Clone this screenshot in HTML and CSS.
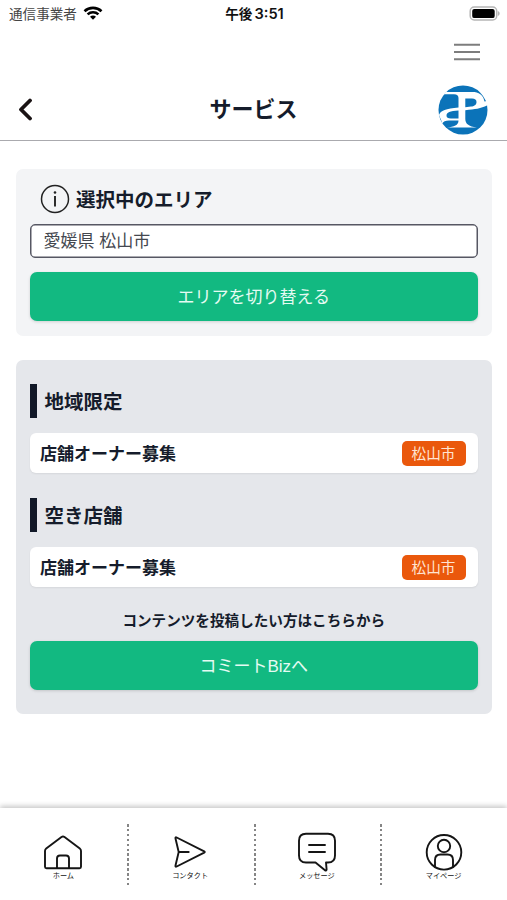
FILE: index.html
```html
<!DOCTYPE html>
<html lang="ja">
<head>
<meta charset="utf-8">
<title>サービス</title>
<link rel="stylesheet" href="styles.css">
</head>
<body>
<div class="app">
  <div class="status">
    <div class="carrier"><span>通信事業者</span>
      <svg width="20" height="14" viewBox="0 0 20 14" fill="none" stroke="#000" stroke-width="2.6"><path d="M1.5 5.2C6.2.7 13.8.7 18.5 5.2M4.6 8.4c3-2.8 7.8-2.8 10.8 0"/><path d="M7 10.7c1.700-1.500 4.300-1.500 6 0l-3 3z" fill="#000" stroke="none"/></svg>
    </div>
    <div class="clock">午後<span>3:51</span></div>
    <svg class="battery" width="31" height="15" viewBox="0 0 31 15"><rect x="1.200" y="1" width="26.500" height="13" rx="4" fill="#fff" stroke="#b5b5b5" stroke-width="1.500"/><rect x="3.200" y="2.900" width="22.500" height="9.200" rx="2.200" fill="#000"/><path d="M28.800 5c2.500.7 2.500 4.300 0 5z" fill="#b5b5b5"/></svg>
  </div>
  <div class="menu">
    <svg width="28" height="18" viewBox="0 0 28 18" stroke="#7d7d7d" stroke-width="2"><path d="M1 1.700h26M1 9h26M1 16.200h26"/></svg>
  </div>
  <header class="header">
    <svg class="back" width="14" height="24" viewBox="0 0 14 24" fill="none" stroke="#1a1314" stroke-width="3.800" stroke-linecap="round" stroke-linejoin="round"><path d="M12 3.500 3 12.500l9 9"/></svg>
    <h1 class="title">サービス</h1>
    <svg class="logo" width="50" height="50" viewBox="0 0 50 50">
      <circle cx="25" cy="25" r="24.500" fill="#0b73b9"/>
      <path fill="#fff" d="M8 7H34c7 0 11 2.500 12.500 9.500l2.500-.5v4.500C43 23.500 37 24.300 27.300 25.200V34c0 4.500 3 7.500 11.700 8.500H9c7-.7 11.500-2 11.500-7H11c-3.500 0-6 1-6.500 3L1 30c1.500-4.500 7-6.500 19.500-7.500V13c0-2.500-1.500-3.800-4.500-3.800H6z"/>
      <path fill="#0b73b9" d="M27.300 13.500H34c3 0 4.500 1.200 4.500 3.500 0 3-2.500 4.200-5.500 4.600l-5.700.7zM20.500 25.500v8h-7.700c-2.800 0-4.300-.8-4.300-3 0-3.200 3.500-4.400 12-5z"/>
    </svg>
  </header>
  <main class="main">
    <section class="card area">
      <h2 class="area-title">
        <svg width="30" height="30" viewBox="0 0 30 30" fill="none" stroke="#222"><circle cx="15" cy="15" r="13.500" stroke-width="1.500"/><path d="M15 12V22.500" stroke-width="1.900"/><circle cx="15" cy="8.500" r="1.300" fill="#222" stroke="none"/></svg>
        <span>選択中のエリア</span>
      </h2>
      <div class="field"><span>愛媛県 松山市</span></div>
      <a class="button"><span>エリアを切り替える</span></a>
    </section>
    <section class="card services">
      <h3 class="group">地域限定</h3>
      <div class="row"><span>店舗オーナー募集</span><span class="badge">松山市</span></div>
      <h3 class="group">空き店舗</h3>
      <div class="row"><span>店舗オーナー募集</span><span class="badge">松山市</span></div>
      <p class="caption">コンテンツを投稿したい方はこちらから</p>
      <a class="button"><span>コミートBizへ</span></a>
    </section>
  </main>
  <nav class="tabs">
    <a class="tab">
      <svg width="40" height="40" viewBox="0 0 40 40"><path d="M3.500 36.200h33q1.500 0 1.500-1.500V19q0-1.500-1.200-2.400L21.500 5q-1.500-1-3 0L3.200 16.600Q2 17.500 2 19v15.700q0 1.500 1.500 1.500zM14 36V26.500q0-3 3-3h6q3 0 3 3V36"/></svg>
      <span>ホーム</span>
    </a>
    <a class="tab">
      <svg width="40" height="40" viewBox="0 0 40 40"><path d="M5.500 6.500q-.4-1.700 1.200-1l27.500 13.800q1.200.7 0 1.400L6.700 34.500q-1.600.7-1.200-1L8.700 20zM8.700 20h10"/></svg>
      <span>コンタクト</span>
    </a>
    <a class="tab">
      <svg width="40" height="40" viewBox="0 0 40 40"><path d="M9 1.800h22q7 0 7 7v14.700q0 7-7 7h-2l.6 7q0 1.500-1.600.8L18.500 30.500H9q-7 0-7-7V8.800q0-7 7-7zM12 13h16M12 20h16"/></svg>
      <span>メッセージ</span>
    </a>
    <a class="tab">
      <svg width="40" height="40" viewBox="0 0 40 40"><circle cx="20" cy="20.300" r="17.300"/><circle cx="20" cy="14" r="6.200"/><path d="M11 34.800V28q0-5.500 5.500-5.500h7q5.500 0 5.500 5.500v6.800"/></svg>
      <span>マイページ</span>
    </a>
  </nav>
</div>
</body>
</html>
```

FILE: styles.css
```css
* { box-sizing: border-box; }
body {
  margin: 0;
  background: #fff;
  color: #151c2b;
  font-family: "Liberation Sans", "Noto Sans CJK JP", sans-serif;
}
h1, h2, h3, p { margin: 0; }
svg { display: block; flex: none; }
.app { height: 900px; display: flex; flex-direction: column; overflow: hidden; }

.status {
  height: 28px;
  padding: 0 7px 0 9px;
  display: grid;
  grid-template-columns: 1fr auto 1fr;
  align-items: center;
  font-size: 13.6px;
  line-height: 20px;
}
.carrier { display: flex; align-items: center; gap: 6px; color: #444; }
.carrier span { padding-top: 1px; }
.carrier svg { margin-top: -3px; }
.clock { font-family: Inter, "Noto Sans CJK JP", sans-serif; font-weight: 600; color: #111; }
.clock span { margin-left: 2px; font-size: 14.600px; }
.battery { justify-self: end; margin-top: -2px; }

.menu { height: 49px; padding: 15px 26px 0 0; display: flex; justify-content: flex-end; }

.header {
  height: 64px;
  padding: 0 19px 0 18px;
  display: grid;
  grid-template-columns: 1fr auto 1fr;
  align-items: center;
  border-bottom: 1px solid #aaaaae;
}
.title { padding: 2px 0 0 1px; font-size: 22px; line-height: 32px; font-weight: 600; }
.logo { justify-self: end; margin-top: 2px; }

.main { flex: 1; padding: 28.400px 15px 0 15.500px; }
.card { border-radius: 7px; padding: 0 14.500px; }
.area { height: 166.500px; padding-top: 14px; margin-bottom: 24px; background: #f3f4f6; }
.area-title {
  height: 32px;
  margin-bottom: 9px;
  padding-left: 10px;
  display: flex;
  align-items: center;
  gap: 6px;
  font-size: 19.500px;
  font-weight: 600;
}
.area-title span { padding-bottom: 1px; }
.field {
  height: 34px;
  padding: 0 0 3px 12.500px;
  display: flex;
  align-items: center;
  background: #fff;
  border: 1px solid #565763;
  box-shadow: inset 0 0 0 .5px #565763;
  border-radius: 5px;
  color: #444850;
  font-size: 17px;
}
.button {
  height: 49px;
  padding-bottom: 3px;
  display: flex;
  align-items: center;
  justify-content: center;
  border-radius: 7px;
  background: #12b981;
  color: #e5fbf3;
  font-size: 17px;
  box-shadow: 0 1px 3px rgba(0, 0, 0, .15);
}
.area .button { margin-top: 14px; }

.services { height: 354px; padding-top: 24px; background: #e5e7eb; }
.group {
  height: 34.500px;
  padding-left: 7.500px;
  padding-bottom: 1px;
  display: flex;
  align-items: center;
  border-left: 7.500px solid #111827;
  font-size: 19.500px;
  font-weight: 600;
}
.row {
  height: 40.500px;
  margin: 14.500px 0 24.500px;
  padding: 0 12px 0 10px;
  display: flex;
  align-items: center;
  justify-content: space-between;
  background: #fff;
  border-radius: 6px;
  box-shadow: 0 1px 2px rgba(0, 0, 0, .07);
  font-size: 17px;
  font-weight: 600;
}
.row > span:first-child { padding-bottom: 1px; }
.badge {
  width: 64px;
  height: 25px;
  padding-bottom: 1px;
  display: flex;
  align-items: center;
  justify-content: center;
  border-radius: 5px;
  background: #ea580c;
  color: #ffe4d2;
  font-size: 14.600px;
  font-weight: 400;
}
.caption { margin: -1px 0 10.300px; text-align: center; font-size: 14.600px; line-height: 20px; font-weight: 600; }

.tabs {
  height: 92px;
  padding-top: 16px;
  display: grid;
  grid-template-columns: repeat(4, 1fr);
  background: #fff;
  box-shadow: 0 -2px 5px rgba(0, 0, 0, .22);
}
.tab {
  height: 63px;
  padding-top: 8px;
  display: flex;
  flex-direction: column;
  align-items: center;
}
.tab + .tab {
  background: repeating-linear-gradient(#858585 0 2.500px, transparent 2.500px 4.900px) left top / 2px 62px no-repeat;
}
.tab svg { fill: none; stroke: #151515; stroke-width: 1.900; stroke-linejoin: round; stroke-linecap: round; }
.tab span { font-size: 7.200px; line-height: 8px; font-weight: 400; color: #111; }
```
